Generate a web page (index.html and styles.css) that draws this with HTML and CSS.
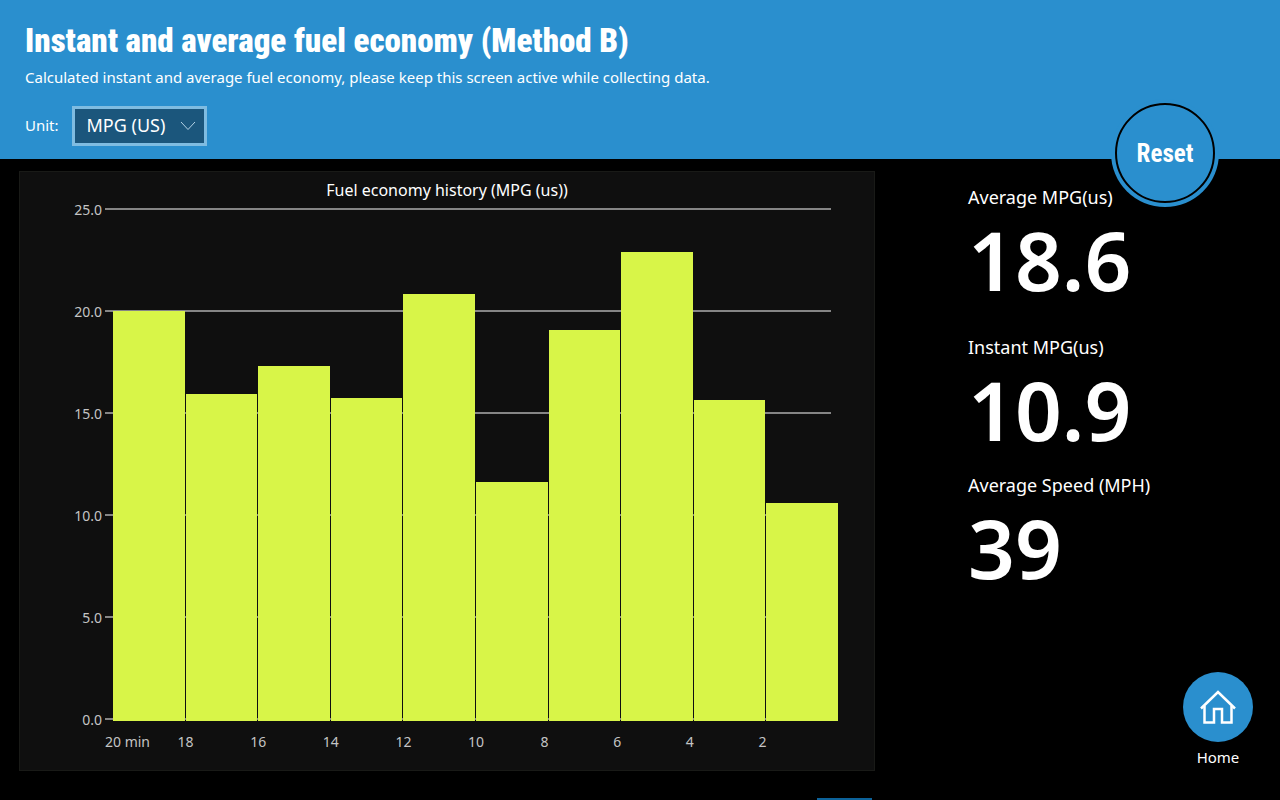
FILE: index.html
```html
<!DOCTYPE html>
<html lang="en">
<head>
<meta charset="utf-8">
<meta name="viewport" content="width=device-width, initial-scale=1">
<title>Instant and average fuel economy</title>
<link rel="stylesheet" href="styles.css">
</head>
<body>
<header class="header">
  <h1 class="title">Instant and average fuel economy (Method B)</h1>
  <p class="subtitle">Calculated instant and average fuel economy, please keep this screen active while collecting data.</p>
  <div class="unit">
    <label class="unit-label" for="unit">Unit:</label>
    <div class="select">
      <select class="select-input" id="unit">
        <option>MPG (US)</option>
        <option>MPG (UK)</option>
        <option>L/100km</option>
      </select>
      <svg class="select-arrow" viewBox="0 0 16 10" aria-hidden="true"><path d="M1 1l7 7.500 7-7.500"/></svg>
    </div>
  </div>
  <button class="reset" type="button">Reset</button>
</header>
<main class="main">
  <div class="history">
    <figure class="chart">
      <figcaption class="chart-title">Fuel economy history (MPG (us))</figcaption>
      <div class="y-axis">
        <span>25.0</span><span>20.0</span><span>15.0</span><span>10.0</span><span>5.0</span><span>0.0</span>
      </div>
      <div class="gridlines">
        <i></i><i></i><i></i><i></i><i></i><i></i>
      </div>
      <div class="bars">
        <div class="bar" style="height:80%"></div>
        <div class="bar" style="height:63.8%"></div>
        <div class="bar" style="height:69.3%"></div>
        <div class="bar" style="height:63%"></div>
        <div class="bar" style="height:83.4%"></div>
        <div class="bar" style="height:46.6%"></div>
        <div class="bar" style="height:76.3%"></div>
        <div class="bar" style="height:91.6%"></div>
        <div class="bar" style="height:62.7%"></div>
        <div class="bar" style="height:42.6%"></div>
      </div>
      <div class="x-axis">
        <span>20 min</span><span>18</span><span>16</span><span>14</span><span>12</span><span>10</span><span>8</span><span>6</span><span>4</span><span>2</span>
      </div>
    </figure>
    <div class="page-marker"></div>
  </div>
  <aside class="side">
    <dl class="stats">
      <div class="stat stat-roomy"><dt>Average MPG(us)</dt><dd>18.6</dd></div>
      <div class="stat"><dt>Instant MPG(us)</dt><dd>10.9</dd></div>
      <div class="stat"><dt>Average Speed (MPH)</dt><dd>39</dd></div>
    </dl>
    <a class="home" href="#home">
      <span class="home-disc">
        <svg class="home-icon" viewBox="0 0 36 34" aria-hidden="true"><path d="M1 18.500L18 2l17 16.500"/><path d="M4.500 16v16.500H14V19h8v13.500h9.500V16"/></svg>
      </span>
      <span>Home</span>
    </a>
  </aside>
</main>
</body>
</html>
```
FILE: styles.css
```css
:root {
  --blue: #2a8fce;
  --ui: "Segoe UI", "Noto Sans", "Open Sans", sans-serif;
}

* { box-sizing: border-box; }

body {
  margin: 0;
  min-height: 100vh;
  display: flex;
  flex-direction: column;
  background: #000;
  color: #fff;
  font: 15px/20px var(--ui);
}

.header {
  position: relative;
  padding: 20px 25px 13px;
  background: var(--blue);
}

.title {
  margin: 0;
  font: 900 33px/42px Impact, "Roboto Condensed", "Open Sans Condensed", "Roboto", sans-serif;
}

.subtitle { margin: 5px 0 19px; }

.unit { display: flex; align-items: center; gap: 13px; }
.unit-label { padding-bottom: 2px; }

.select { display: grid; align-items: center; }

.select-input {
  grid-area: 1 / 1;
  appearance: none;
  width: 135px;
  height: 40px;
  padding: 0 32px 2px 12px;
  border: 3px solid #7fbce1;
  border-radius: 0;
  background: #1b567c;
  color: #fff;
  font: 18px/24px var(--ui);
}

.select-arrow {
  grid-area: 1 / 1;
  justify-self: end;
  width: 16px;
  height: 10px;
  margin-right: 11px;
  fill: none;
  stroke: #b5d3e6;
  pointer-events: none;
}

.reset {
  position: absolute;
  right: 65px;
  bottom: -44px;
  width: 100px;
  height: 100px;
  padding: 2px 0 0;
  border: 2px solid #000;
  border-radius: 50%;
  background: var(--blue);
  box-shadow: 0 0 0 4px var(--blue);
  color: #fff;
  font: bold 25px/28px "Roboto Condensed", "Liberation Sans", sans-serif;
}

.main {
  flex: 1;
  display: grid;
  grid-template-columns: minmax(0, 1fr) 405px;
}

.history {
  display: flex;
  flex-direction: column;
  padding: 12px 0 0 19px;
}

.chart {
  flex: 1;
  display: grid;
  grid-template: 37px minmax(300px, 1fr) 51px / 85px minmax(0, 1fr) 43px;
  margin: 0;
  border: 1px solid #191a17;
  background: #0f0f0f;
  color: #c4c4c4;
  font-size: 14px;
}

.chart-title {
  grid-area: 1 / 1 / 2 / 4;
  padding-top: 8px;
  color: #fff;
  font-size: 16px;
  text-align: center;
}

.y-axis {
  grid-area: 2 / 1;
  display: flex;
  flex-direction: column;
  justify-content: space-between;
  margin: -9px 0 -11px;
  padding-right: 3px;
  text-align: right;
}

.gridlines {
  grid-area: 2 / 2;
  display: flex;
  flex-direction: column;
  justify-content: space-between;
  margin: -1px 0;
}

.gridlines i { height: 2px; background: #858585; }

.bars {
  grid-area: 2 / 2;
  display: grid;
  grid-template-columns: repeat(10, 1fr);
  column-gap: 1px;
  align-items: end;
  margin: 0 -7px -2px 8px;
}

.bar { background: #d8f548; }

.x-axis {
  grid-area: 3 / 2;
  display: grid;
  grid-template-columns: repeat(10, 1fr);
  padding-top: 13px;
  white-space: nowrap;
}

.page-marker {
  align-self: flex-end;
  width: 55px;
  height: 2px;
  margin: 27px 3px 0 0;
  background: #0c6299;
}

.side {
  display: flex;
  flex-direction: column;
  padding: 24px 27px 33px 93px;
}

.stats { margin: 0; }
.stat { margin-bottom: 14px; }
.stat-roomy { margin-bottom: 26px; }
.stat dt { font-size: 18px; line-height: 28px; }
.stat dd { margin: 0; font-size: 82px; line-height: 96px; font-weight: 600; }

.home {
  display: flex;
  flex-direction: column;
  align-items: center;
  align-self: flex-end;
  gap: 5px;
  margin-top: auto;
  color: #fff;
  text-decoration: none;
}

.home-disc {
  display: grid;
  place-items: center;
  width: 70px;
  height: 70px;
  border-radius: 50%;
  background: var(--blue);
}

.home-icon {
  width: 36px;
  height: 34px;
  fill: none;
  stroke: #fff;
  stroke-width: 2.5;
}
```
